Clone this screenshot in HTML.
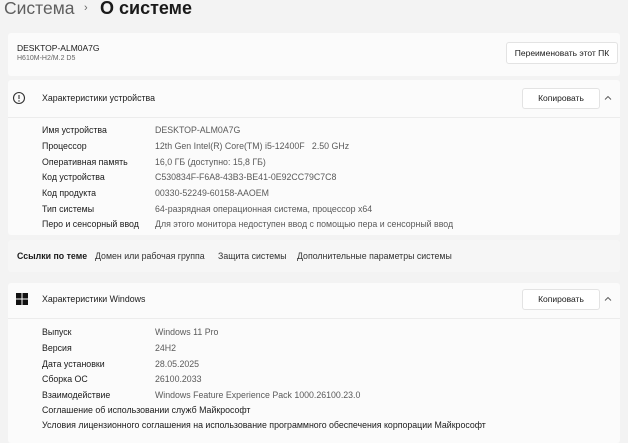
<!DOCTYPE html><html><head><meta charset="utf-8"><style>
*{margin:0;padding:0;box-sizing:border-box}
body{width:628px;height:434px;overflow:hidden;background:#f3f3f3;font-family:"Liberation Sans","DejaVu Sans",sans-serif;color:#1b1b1b;position:relative;font-size:8.8px}
.a{position:absolute;white-space:nowrap}
.card{position:absolute;left:8px;width:612px;background:#fbfbfb;border-radius:3px}
.btn{position:absolute;background:#fff;border:1px solid #e3e3e3;border-radius:3px;font-size:8.5px;text-align:center}
.l{position:absolute;left:42px;white-space:nowrap}
.v{position:absolute;left:155px;color:#5a5a5a;white-space:nowrap}
</style></head><body>
<div class="a" style="left:4px;top:-2px;font-size:17.5px;color:#5f5f5f">Система</div>
<div class="a" style="left:84px;top:2px;font-size:11px;color:#666">›</div>
<div class="a" style="left:100px;top:-2px;font-size:18px;font-weight:bold;color:#1a1a1a">О системе</div>

<div class="card" style="top:33px;height:43px"></div>
<div class="a" style="left:17px;top:43px;font-size:8.5px">DESKTOP-ALM0A7G</div>
<div class="a" style="left:17px;top:55px;font-size:7px;color:#666">H610M-H2/M.2 D5</div>
<div class="btn" style="left:506px;top:42px;width:112px;height:22px;line-height:20px">Переименовать этот ПК</div>

<div class="card" style="top:80px;height:155px"></div>
<div style="position:absolute;left:8px;top:117px;width:612px;height:1px;background:#ececec"></div>
<svg class="a" style="left:12px;top:91px" width="14" height="14"><circle cx="7" cy="7" r="5.5" fill="none" stroke="#333" stroke-width="1.1"/><line x1="7" y1="4" x2="7" y2="8" stroke="#333" stroke-width="1.1"/><circle cx="7" cy="10" r=".7" fill="#333"/></svg>
<div class="a" style="left:42px;top:93px">Характеристики устройства</div>
<div class="btn" style="left:522px;top:88px;width:78px;height:21px;line-height:19px">Копировать</div>
<svg class="a" style="left:604px;top:95px" width="8" height="6"><path d="M1 4.5L4 1.5L7 4.5" fill="none" stroke="#555" stroke-width="0.9"/></svg>
<div class="l" style="top:125px">Имя устройства</div><div class="v" style="top:125px">DESKTOP-ALM0A7G</div>
<div class="l" style="top:141px">Процессор</div><div class="v" style="top:141px">12th Gen Intel(R) Core(TM) i5-12400F &nbsp; 2.50 GHz</div>
<div class="l" style="top:157px">Оперативная память</div><div class="v" style="top:157px">16,0 ГБ (доступно: 15,8 ГБ)</div>
<div class="l" style="top:172px">Код устройства</div><div class="v" style="top:172px">C530834F-F6A8-43B3-BE41-0E92CC79C7C8</div>
<div class="l" style="top:188px">Код продукта</div><div class="v" style="top:188px">00330-52249-60158-AAOEM</div>
<div class="l" style="top:204px">Тип системы</div><div class="v" style="top:204px">64-разрядная операционная система, процессор x64</div>
<div class="l" style="top:219px">Перо и сенсорный ввод</div><div class="v" style="top:219px">Для этого монитора недоступен ввод с помощью пера и сенсорный ввод</div>

<div class="card" style="top:240px;height:32px;background:#f6f6f6"></div>
<div class="a" style="left:17px;top:251px;font-weight:bold">Ссылки по теме</div>
<div class="a" style="left:95px;top:251px;color:#333">Домен или рабочая группа</div>
<div class="a" style="left:218px;top:251px;color:#333">Защита системы</div>
<div class="a" style="left:297px;top:251px;color:#333">Дополнительные параметры системы</div>

<div class="card" style="top:283px;height:160px"></div>
<div style="position:absolute;left:8px;top:318px;width:612px;height:1px;background:#ececec"></div>
<svg class="a" style="left:16px;top:293px" width="12" height="12"><rect x="0" y="0" width="5.5" height="5.5" fill="#111"/><rect x="6.5" y="0" width="5.5" height="5.5" fill="#111"/><rect x="0" y="6.5" width="5.5" height="5.5" fill="#111"/><rect x="6.5" y="6.5" width="5.5" height="5.5" fill="#111"/></svg>
<div class="a" style="left:42px;top:294px">Характеристики Windows</div>
<div class="btn" style="left:522px;top:289px;width:78px;height:21px;line-height:19px">Копировать</div>
<svg class="a" style="left:604px;top:296px" width="8" height="6"><path d="M1 4.5L4 1.5L7 4.5" fill="none" stroke="#555" stroke-width="0.9"/></svg>
<div class="l" style="top:327px">Выпуск</div><div class="v" style="top:327px">Windows 11 Pro</div>
<div class="l" style="top:343px">Версия</div><div class="v" style="top:343px">24H2</div>
<div class="l" style="top:359px">Дата установки</div><div class="v" style="top:359px">28.05.2025</div>
<div class="l" style="top:374px">Сборка ОС</div><div class="v" style="top:374px">26100.2033</div>
<div class="l" style="top:390px">Взаимодействие</div><div class="v" style="top:390px">Windows Feature Experience Pack 1000.26100.23.0</div>
<div class="l" style="top:405px">Соглашение об использовании служб Майкрософт</div>
<div class="l" style="top:420px">Условия лицензионного соглашения на использование программного обеспечения корпорации Майкрософт</div>
</body></html>
